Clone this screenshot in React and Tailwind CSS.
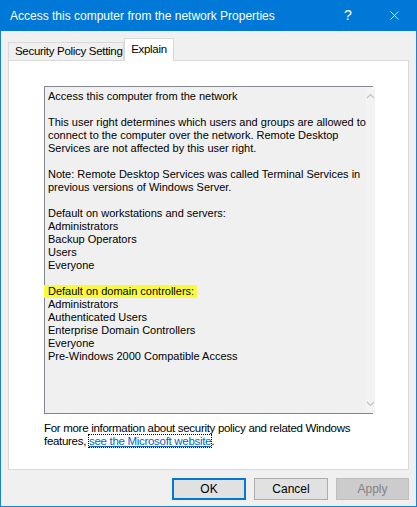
import { X } from 'lucide-react'

const lines = [
	'Access this computer from the network',
	'',
	'This user right determines which users and groups are allowed to',
	'connect to the computer over the network. Remote Desktop',
	'Services are not affected by this user right.',
	'',
	'Note: Remote Desktop Services was called Terminal Services in',
	'previous versions of Windows Server.',
	'',
	'Default on workstations and servers:',
	'Administrators',
	'Backup Operators',
	'Users',
	'Everyone',
	'',
	'@Default on domain controllers:',
	'Administrators',
	'Authenticated Users',
	'Enterprise Domain Controllers',
	'Everyone',
	'Pre-Windows 2000 Compatible Access',
]

export default function App() {
	return (
		<div className="w-[417px] h-[507px] bg-[#f0f0f0] border border-t-0 border-[#1883d7] flex flex-col font-['Liberation_Sans',sans-serif] text-black select-none">
			{/* title bar */}
			<div className="h-[31px] shrink-0 bg-[#0078d7] text-white flex items-center pl-[10px] -mx-px">
				<span className="text-[12px] whitespace-nowrap">Access this computer from the network Properties</span>
				<span className="ml-auto w-[46px] text-center text-[14px]">?</span>
				<span className="w-[46px] flex justify-center">
					<X size={15} strokeWidth={1.3} />
				</span>
			</div>

			<div className="px-[7px] pt-[7px] flex flex-col">
				{/* tabs */}
				<div className="flex items-end h-[22px] text-[11.5px] tracking-[-0.3px] whitespace-nowrap">
					<div className="h-[18px] w-[116px] border border-b-0 border-[#d9d9d9] bg-[#f0f0f0] flex items-center pl-[6px]">
						Security Policy Setting
					</div>
					<div className="h-[23px] w-[50px] -mb-px border border-b-0 border-[#d9d9d9] bg-white relative z-10 flex items-start pt-[2px] justify-center">
						Explain
					</div>
				</div>

				{/* panel */}
				<div className="h-[410px] border border-[#d9d9d9] bg-white pl-[35px] pt-[25px]">
					<div className="w-[329px] h-[328px] border border-[#828790] bg-[#f0f0f0] flex">
						<div className="flex-1 pl-[3px] pt-[3px] text-[11px] leading-[13px]">
							{lines.map((l, i) =>
								l === '' ? (
									<div key={i} className="h-[13px]" />
								) : l.startsWith('@') ? (
									<div key={i}>
										<span className="-ml-[4px] pl-[4px] pr-[3px] bg-[#fafa3c] inline-block leading-[13px]">
											{l.slice(1)}
										</span>
									</div>
								) : (
									<div key={i} className="whitespace-nowrap">{l}</div>
								)
							)}
						</div>
						<div className="w-[18px] flex flex-col items-center justify-between py-[6px] bg-[#f3f3f3]">
							<svg width="9" height="6" viewBox="0 0 9 6">
								<path d="M1 5 L4.5 1.5 L8 5" fill="none" stroke="#c2c2c2" strokeWidth="1.2" />
							</svg>
							<svg width="9" height="6" viewBox="0 0 9 6">
								<path d="M1 1 L4.5 4.5 L8 1" fill="none" stroke="#c2c2c2" strokeWidth="1.2" />
							</svg>
						</div>
					</div>
					<div className="mt-[8px] text-[11.5px] tracking-[-0.3px] leading-[13px] whitespace-nowrap">
						<div>For more information about security policy and related Windows</div>
						<div>
							features,{' '}
							<span className="text-[#0066cc] underline outline outline-1 outline-dotted outline-black">
								see the Microsoft website
							</span>
							.
						</div>
					</div>
				</div>

				{/* buttons */}
				<div className="flex justify-end gap-[8px] mt-[8px] text-[12px]">
					<button className="w-[74px] h-[22px] border-2 border-[#0078d7] bg-[#e1e1e1] flex items-center justify-center">
						OK
					</button>
					<button className="w-[74px] h-[22px] border border-[#adadad] bg-[#e1e1e1] flex items-center justify-center">
						Cancel
					</button>
					<button className="w-[73px] h-[22px] border border-[#bfbfbf] bg-[#cccccc] text-[#838383] flex items-center justify-center">
						Apply
					</button>
				</div>
			</div>
		</div>
	)
}
